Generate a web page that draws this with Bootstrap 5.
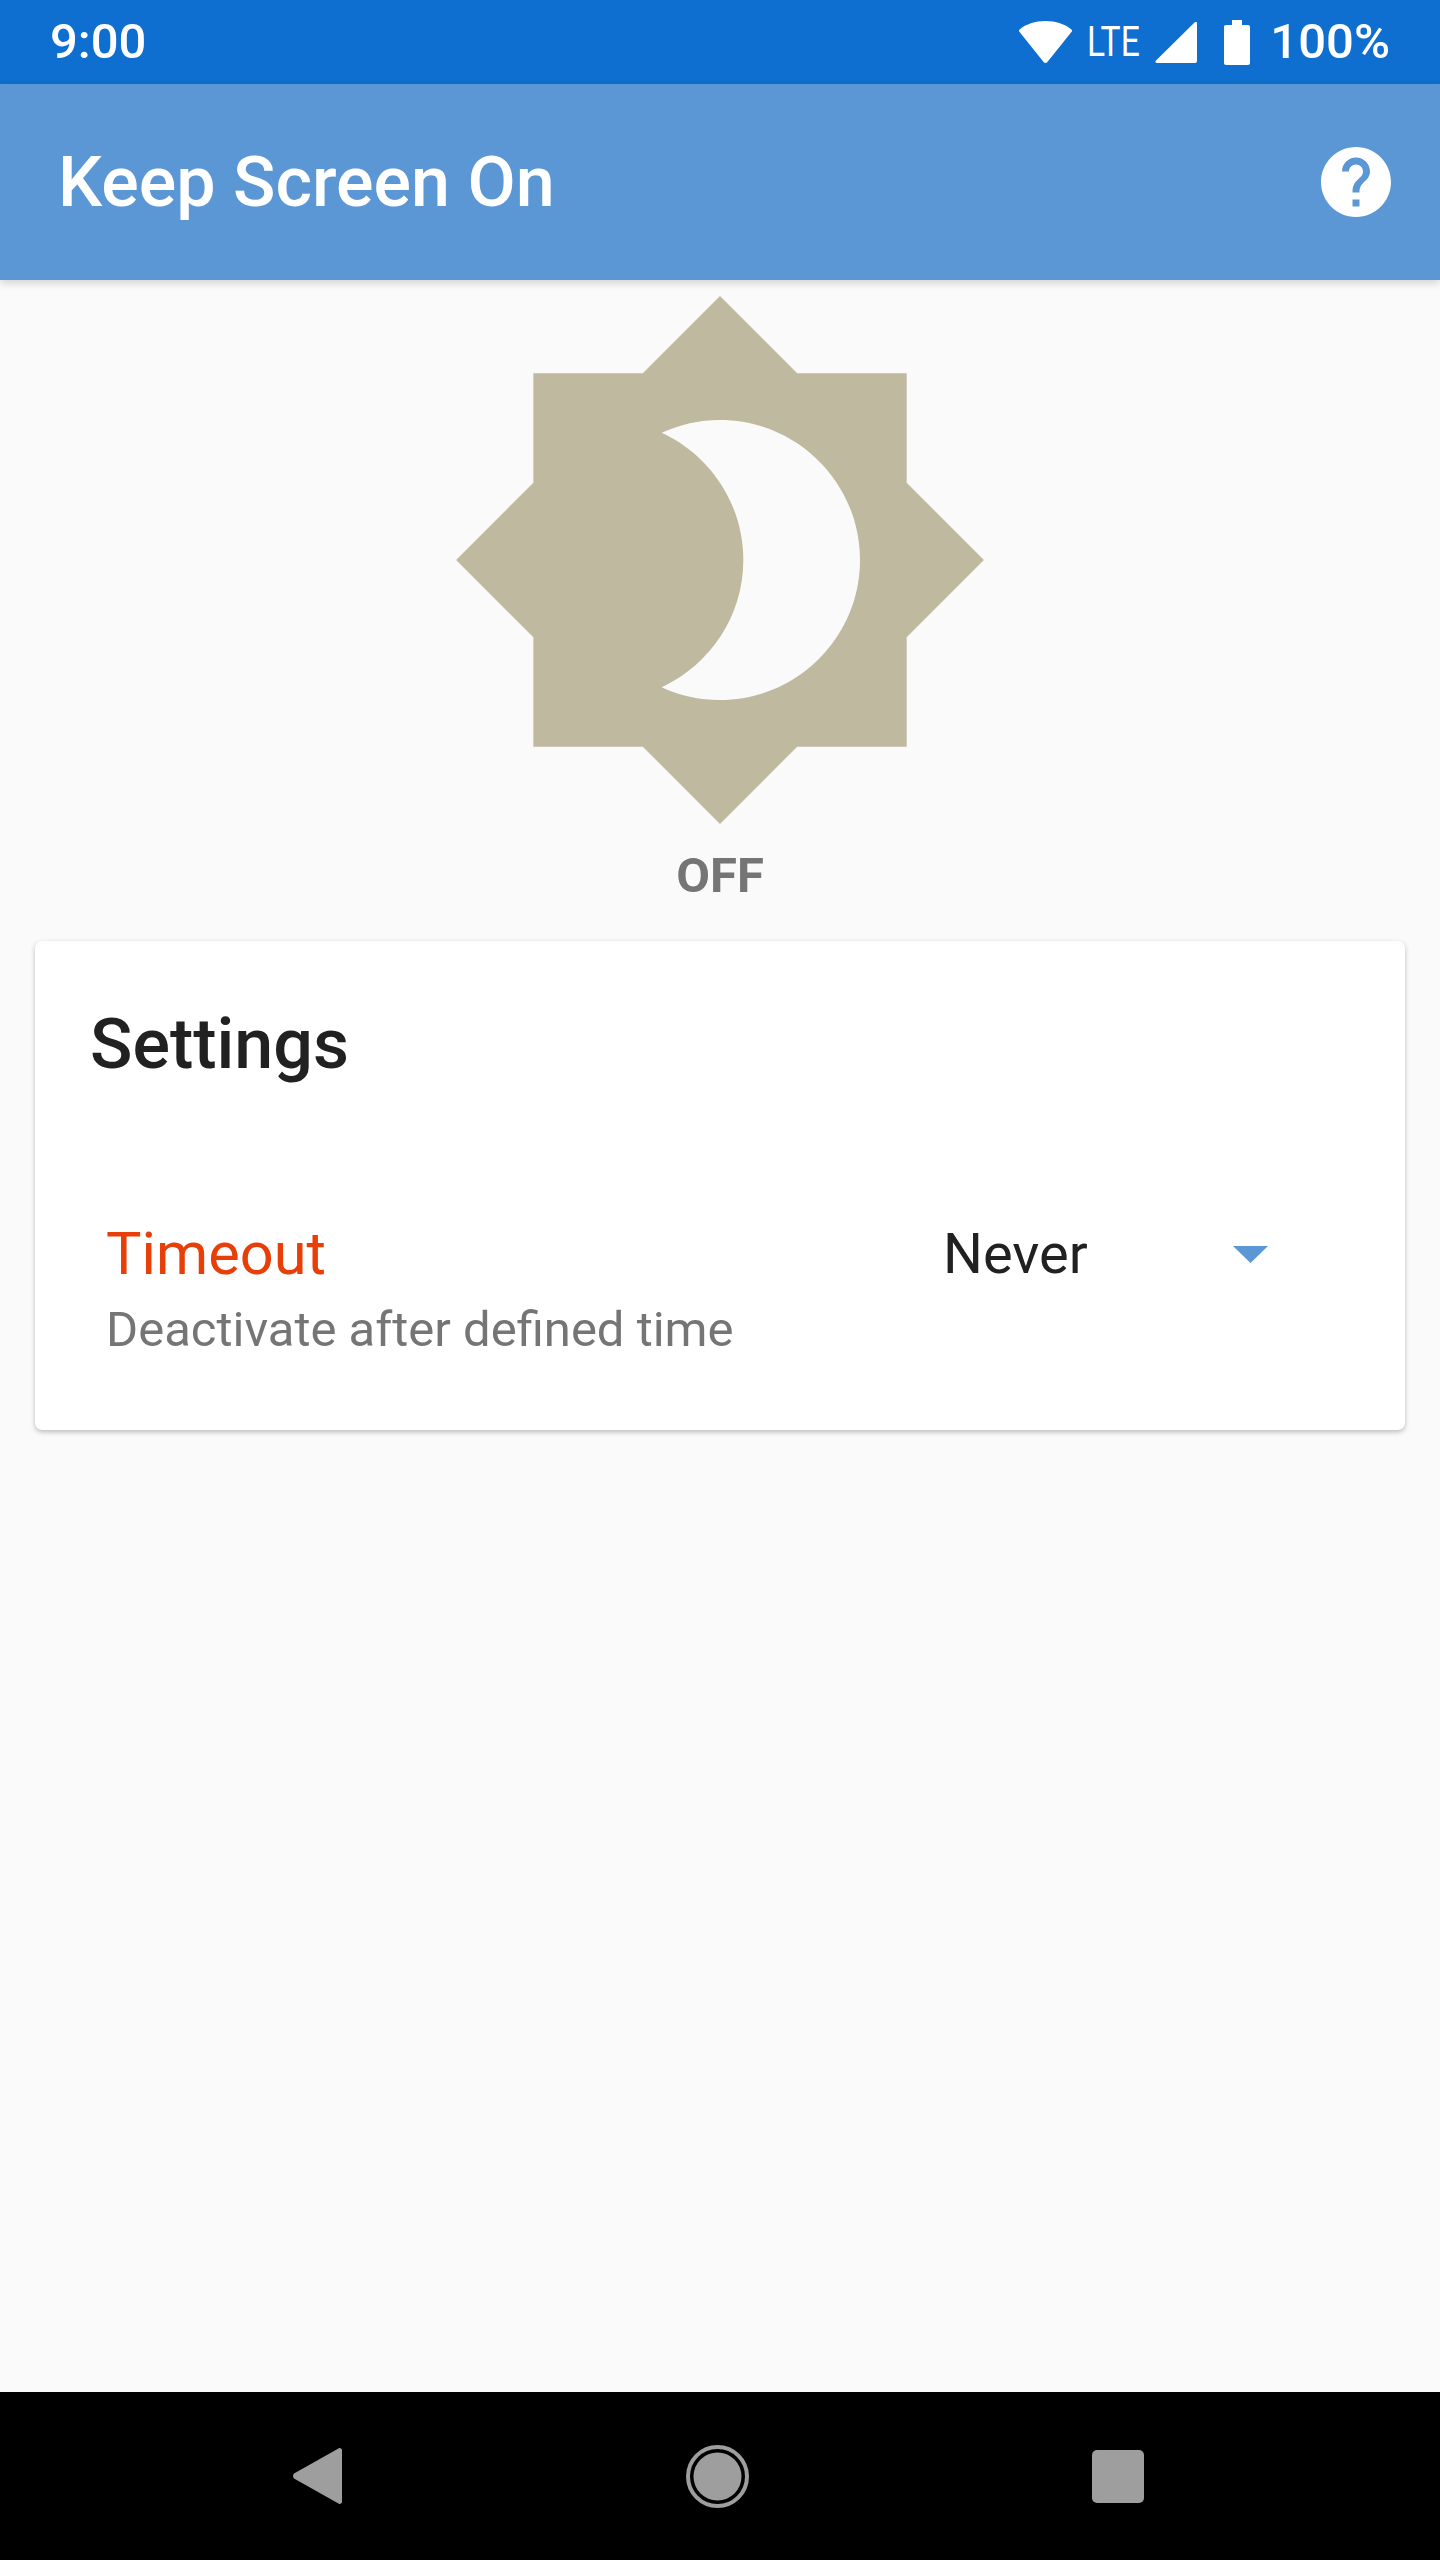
<!DOCTYPE html>
<html lang="en">
<head>
    <meta charset="UTF-8">
    <meta name="viewport" content="width=device-width, initial-scale=1.0">
    <title>Keep Screen On</title>
    <link href="https://cdn.jsdelivr.net/npm/bootstrap@5.3.2/dist/css/bootstrap.min.css" rel="stylesheet">
    <script src="https://cdn.jsdelivr.net/npm/bootstrap@5.3.2/dist/js/bootstrap.bundle.min.js"></script>
    <style>
        html, body { margin: 0; background: #fafafa; }
        body { font-family: Roboto, "Liberation Sans", sans-serif; }
        .screen { width: 1440px; height: 2560px; overflow: hidden; }

        .status-strip { height: 84px; background: #0e6fd0; color: #fff; padding: 0 50px; font-size: 49px; line-height: 84px; font-weight: 500; }
        .status-time { padding-top: 0; }
        .status-lte { display: inline-block; width: 57px; font-size: 42px; font-weight: 400; transform: scaleX(.8); transform-origin: left center; margin-left: 15px; }
        .status-pct { margin-left: 20px; }
        .status-signal { margin-left: 11px; }
        .status-battery { margin-left: 27px; }

        .app-strip { height: 196px; background: #5b97d5; color: #fff; padding: 0 42px 0 58px; box-shadow: 0 3px 8px rgba(0,0,0,.16); position: relative; }
        .app-title { font-size: 70px; line-height: 84px; font-weight: 500; margin: 0; }

        .state-label { font-size: 49px; line-height: 49px; font-weight: 700; color: #757575; margin-top: 11px; margin-bottom: 41px; }

        .settings-card { margin: 0 35px; border: 0; border-radius: 7px; background: #fff; box-shadow: 0 2px 5px rgba(0,0,0,.26); }
        .settings-body { padding: 61px 0 68px 55px; }
        .settings-title { font-size: 70px; line-height: 84px; font-weight: 500; color: #212121; margin: 0 0 130px; }
        .timeout-row { padding: 0 137px 0 16px; }
        .timeout-name { font-size: 59.5px; line-height: 76px; color: #e83e08; }
        .timeout-hint { font-size: 49px; line-height: 64px; color: #757575; margin-top: 6px; }
        .timeout-select { width: 325px; font-size: 56px; line-height: 76px; color: #212121; }

        .nav-strip { height: 168px; background: #000; padding: 0 296px 0 293px; }
    </style>
</head>
<body>
<div class="screen d-flex flex-column">
    <!-- status bar -->
    <div class="status-strip d-flex align-items-center flex-shrink-0">
        <span class="status-time">9:00</span>
        <span class="ms-auto d-flex align-items-center">
            <svg width="53" height="42" viewBox="0 0 53 42"><path d="M26.5 0C16 0 7 3 .6 8.5c-.8.7-.8 1.6-.2 2.3L24.6 41c1 1.2 2.8 1.2 3.8 0l24.2-30.2c.6-.7.6-1.6-.2-2.3C46 3 37 0 26.5 0z" fill="#fff"/></svg>
            <span class="status-lte">LTE</span>
            <svg class="status-signal" width="42" height="41" viewBox="0 0 42 41"><path d="M40 0 1 38.600c-1.200 1.200-.6 2.400 1 2.400h38c1.200 0 2-.8 2-2V1.500C42 .2 41-.6 40 0z" fill="#fff"/></svg>
            <svg class="status-battery" width="26" height="45" viewBox="0 0 26 45"><path d="M8 0h10v5h6c1.200 0 2 .8 2 2v36c0 1.200-.8 2-2 2H2c-1.200 0-2-.8-2-2V7c0-1.200.8-2 2-2h6z" fill="#fff"/></svg>
            <span class="status-pct">100%</span>
        </span>
    </div>

    <!-- app bar -->
    <div class="app-strip d-flex align-items-center justify-content-between flex-shrink-0">
        <h1 class="app-title">Keep Screen On</h1>
        <svg width="84" height="84" viewBox="0 0 24 24"><path fill="#fff" d="M12 2C6.480 2 2 6.480 2 12s4.480 10 10 10 10-4.480 10-10S17.520 2 12 2zm1 17h-2v-2h2v2zm2.070-7.750l-.9.920C13.450 12.900 13 13.500 13 15h-2v-.5c0-1.100.45-2.100 1.170-2.830l1.240-1.260c.37-.36.59-.86.59-1.410 0-1.100-.9-2-2-2s-2 .9-2 2H8c0-2.210 1.790-4 4-4s4 1.790 4 4c0 .88-.36 1.680-.93 2.250z"/></svg>
    </div>

    <div class="flex-grow-1">
        <!-- toggle -->
        <div class="d-flex flex-column align-items-center">
            <svg width="560" height="560" viewBox="0 0 24 24"><path fill="#bfb9a0" d="M20 15.310L23.310 12 20 8.690V4h-4.690L12 .69 8.690 4H4v4.690L.69 12 4 15.310V20h4.690L12 23.310 15.310 20H20v-4.690zM12 18c-.89 0-1.740-.2-2.500-.55C11.560 16.500 13 14.420 13 12s-1.440-4.500-3.500-5.450C10.260 6.200 11.110 6 12 6c3.310 0 6 2.690 6 6s-2.690 6-6 6z"/></svg>
            <div class="state-label">OFF</div>
        </div>

        <!-- settings -->
        <div class="card settings-card">
            <div class="card-body settings-body">
                <h2 class="card-title settings-title">Settings</h2>
                <div class="timeout-row d-flex justify-content-between">
                    <div>
                        <div class="timeout-name">Timeout</div>
                        <div class="timeout-hint">Deactivate after defined time</div>
                    </div>
                    <div class="timeout-select d-flex justify-content-between align-items-center align-self-start">
                        <span>Never</span>
                        <svg width="35" height="17" viewBox="0 0 35 17"><path d="M0 0h35L17.500 17z" fill="#5b97d5"/></svg>
                    </div>
                </div>
            </div>
        </div>
    </div>

    <!-- nav bar -->
    <div class="nav-strip d-flex align-items-center justify-content-between flex-shrink-0">
        <svg width="49" height="56" viewBox="0 0 49 56"><path d="M1 30.500c-1.300-1.400-1.300-3.600 0-5L45 .8C46.800-.8 49 .3 49 2.500v51c0 2.200-2.200 3.300-4 1.700z" fill="#9e9e9e"/></svg>
        <svg width="63" height="63" viewBox="0 0 63 63"><circle cx="31.500" cy="31.500" r="29.500" fill="none" stroke="#9e9e9e" stroke-width="4"/><circle cx="31.500" cy="31.500" r="24" fill="#9e9e9e"/></svg>
        <svg width="52" height="53" viewBox="0 0 52 53"><rect width="52" height="53" rx="5" fill="#9e9e9e"/></svg>
    </div>
</div>
</body>
</html>
